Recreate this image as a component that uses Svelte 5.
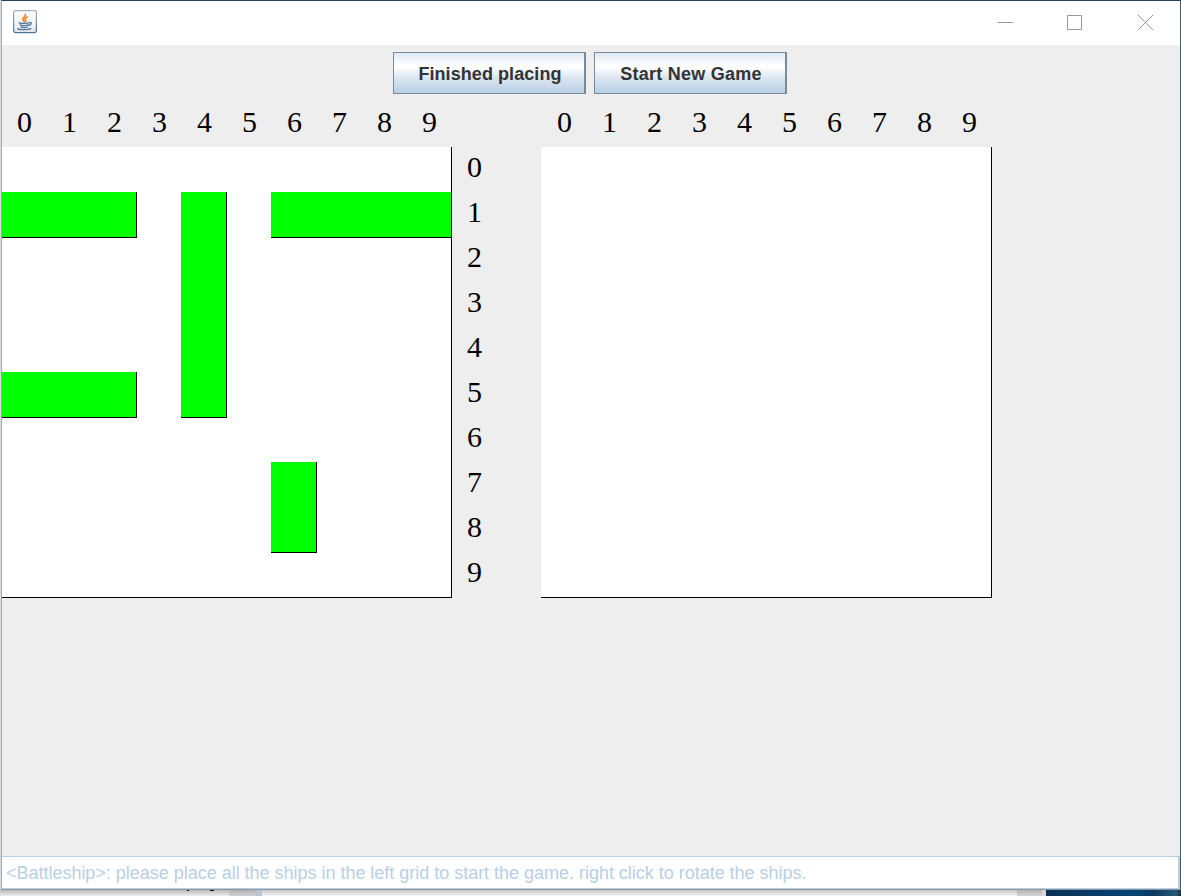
<script>
  const labels = [0, 1, 2, 3, 4, 5, 6, 7, 8, 9];
  const ships = [
    { x: 0, y: 1, w: 3, h: 1 },
    { x: 4, y: 1, w: 1, h: 5 },
    { x: 6, y: 1, w: 4, h: 1 },
    { x: 0, y: 5, w: 3, h: 1 },
    { x: 6, y: 7, w: 1, h: 2 }
  ];
  const area = (s) => `grid-area: ${s.y + 1} / ${s.x + 1} / span ${s.h} / span ${s.w}`;
</script>

<div class="screen">
  <div class="window">
    <header>
      <svg class="java" width="24" height="24" viewBox="0 0 24 24">
        <defs>
          <linearGradient id="tile" x1="0" y1="0" x2="0" y2="1">
            <stop offset="0" stop-color="#fdfdfd" />
            <stop offset="0.5" stop-color="#f4f6f7" />
            <stop offset="1" stop-color="#e3e6e8" />
          </linearGradient>
          <linearGradient id="edge" x1="0" y1="0" x2="0" y2="1">
            <stop offset="0" stop-color="#9fb3c1" />
            <stop offset="1" stop-color="#4d7492" />
          </linearGradient>
        </defs>
        <rect x="0.6" y="0.6" width="22.8" height="22" rx="2" fill="url(#tile)" stroke="url(#edge)" stroke-width="1.2" />
        <g fill="none" stroke-linecap="round">
          <path d="M12.4 4.2c1.2 2.4-4 3.4-2.6 5.6.4.7 1 1 1.2 1.7M14.2 6.9c-2.6 1.2-2.7 2.2-1.7 3.2.5.6.1 1.1-.4 1.5" stroke="#f08526" stroke-width="1.6" />
          <path d="M6.4 12.6c-1.4.9 7.9 1.3 10.2.1M7.2 14.8c1.2 1 6.4 1 8.2.1M8 16.9c1.4.7 5 .7 6.6.1M16.8 12.6c2.3-.6 2 2-.7 2.7M5 18.5c-1.4 1.1 8.4 2 13 .1" stroke="#50799c" stroke-width="1.3" />
        </g>
      </svg>
      <div class="controls">
        <svg width="15" height="15" viewBox="0 0 15 15"><path d="M0 7.5h15" /></svg>
        <svg width="15" height="15" viewBox="0 0 15 15"><path d="M.5.5h14v14H.5z" /></svg>
        <svg width="15" height="15" viewBox="0 0 15 15"><path d="M0 0l15 15M15 0L0 15" /></svg>
      </div>
    </header>

    <main>
      <div class="buttons">
        <button>Finished placing</button>
        <button class="wide">Start New Game</button>
      </div>
      <div class="game">
        <section>
          <div class="cols">{#each labels as n}<span>{n}</span>{/each}</div>
          <div class="board own">
            {#each ships as s}<div class="ship" style={area(s)}></div>{/each}
          </div>
        </section>
        <div class="rows">{#each labels as n}<span>{n}</span>{/each}</div>
        <section>
          <div class="cols">{#each labels as n}<span>{n}</span>{/each}</div>
          <div class="board"></div>
        </section>
      </div>
    </main>

    <footer>&lt;Battleship&gt;: please place all the ships in the left grid to start the game. right click to rotate the ships.</footer>
  </div>
  <div class="behind">
    <i class="shade"><b class="p"></b><b class="y"></b></i><i class="thumb"></i><i class="bar"></i><i class="pane"></i><i class="scroll"></i><i class="light"></i><i class="desk"></i>
  </div>
</div>

<style>
  :global(body) { margin: 0; overflow: hidden; }
  .screen {
    box-sizing: border-box;
    width: 1181px;
    height: 896px;
    display: flex;
    flex-direction: column;
    background: #d9dde2;
    overflow: hidden;
  }
  .window {
    box-sizing: border-box;
    height: 890px;
    margin-left: 1px;
    display: flex;
    flex-direction: column;
    border: 1px solid #a5a7a8;
    border-top-color: #2b4255;
    border-right-color: #386270;
    border-bottom-color: #8a989f;
    background: #eee;
  }
  header {
    height: 44px;
    display: flex;
    justify-content: space-between;
    background: #fff;
  }
  .java { margin: 9px 0 0 11px; }
  .controls {
    display: flex;
    align-items: flex-start;
    padding: 14px 27px 0 0;
  }
  .controls svg { fill: none; stroke: #999; stroke-width: 1; }
  .controls svg:nth-child(2) { margin: 0 56px 0 54px; }
  main { flex: 1; display: flex; flex-direction: column; }
  .buttons {
    display: flex;
    justify-content: center;
    gap: 8px;
    padding: 7px 2px 0 0;
  }
  button {
    box-sizing: border-box;
    width: 193px;
    height: 42px;
    padding: 3px 0 0 2px;
    border: 1px solid #7a8a99;
    border-right-width: 2px;
    border-radius: 0;
    background: linear-gradient(#dde8f3, #fff 30%, #fff 36%, #dce6f1 62%, #b8cfe5);
    color: #333;
    font: bold 18px "Liberation Sans", Arial, sans-serif;
    letter-spacing: 0.07px;
    white-space: nowrap;
  }
  .wide { letter-spacing: 0.26px; }
  .game {
    display: flex;
    margin: 8px 0 0 -1px;
    font: 30px/45px "Liberation Serif", "Times New Roman", serif;
    color: #000;
  }
  .cols { display: flex; height: 45px; line-height: 40px; }
  .cols span { width: 45px; padding-left: 2px; box-sizing: border-box; text-align: center; }
  .board {
    width: 450px;
    height: 450px;
    display: grid;
    grid-template: repeat(10, 45px) / repeat(10, 45px);
    border-right: 1px solid #000;
    border-bottom: 1px solid #000;
    background: #fff;
  }
  .own { clip-path: inset(0 0 0 1px); }
  .ship {
    margin: 0 -1px -1px 0;
    background: #0f0;
    border-right: 1px solid #000;
    border-bottom: 1px solid #000;
  }
  .rows {
    width: 89px;
    padding-top: 45px;
    display: flex;
    flex-direction: column;
  }
  .rows span { height: 45px; line-height: 40px; padding-left: 15px; }
  footer {
    box-sizing: border-box;
    height: 33px;
    padding-left: 4px;
    border: 1px solid #b8cfe5;
    border-left: 0;
    border-right-width: 2px;
    background: #fff;
    color: #b8cfe5;
    font: 18px/32px "Liberation Sans", Arial, sans-serif;
    letter-spacing: -0.018px;
    white-space: nowrap;
  }
  .behind { height: 6px; display: flex; }
  .shade { width: 229px; display: flex; background: linear-gradient(#b9b9b9, #eee); }
  .p, .y { height: 1px; background: #111; }
  .p { width: 2px; margin-left: 187px; }
  .y { width: 4px; margin-left: 21px; }
  .thumb { width: 26px; background: linear-gradient(#b0b0b0, #d2d2d2); }
  .bar { width: 7px; background: #bcc2d0; }
  .pane { width: 755px; background: linear-gradient(#c6c6c6, #f6f6f6); }
  .scroll { width: 25px; background: linear-gradient(#b4b4b4, #d4d4d4); }
  .light { width: 4px; background: #d8d8d8; }
  .desk { flex: 1; background: linear-gradient(90deg, #0a3156, #084474 65%, #0b3a60 80%, #2a5a78 96%, #12344f); }
</style>
